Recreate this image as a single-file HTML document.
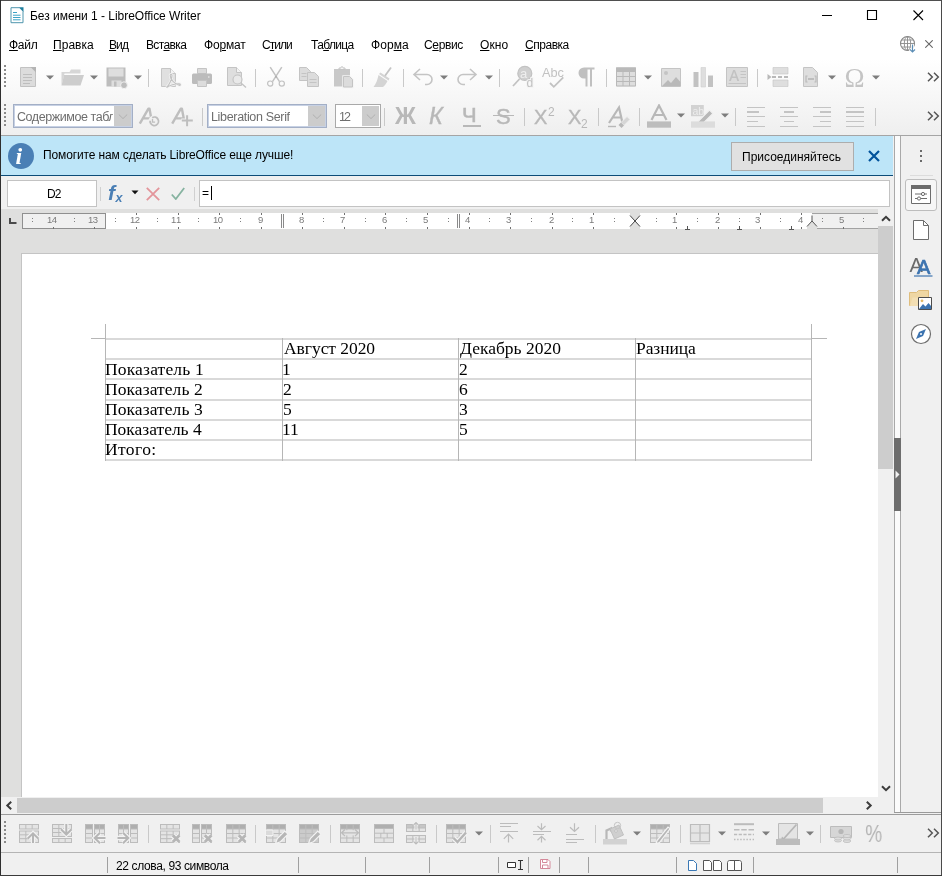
<!DOCTYPE html>
<html lang="ru"><head><meta charset="utf-8"><title>Без имени 1 - LibreOffice Writer</title>
<style>
html,body{margin:0;padding:0}
body{width:942px;height:876px;position:relative;overflow:hidden;background:#f0f0f0;font-family:"Liberation Sans",sans-serif;font-size:12px;color:#000}
.a{position:absolute}
.t{white-space:nowrap;will-change:transform}
svg{will-change:transform}
u{text-decoration:underline;text-underline-offset:1px;text-decoration-thickness:1px}
</style></head>
<body>
<div class="a" style="left:0px;top:0px;width:942px;height:876px;background:#f0f0f0;"></div>
<div class="a" style="left:0px;top:0px;width:942px;height:59px;background:#ffffff;"></div>
<div class="a" style="left:0px;top:59px;width:942px;height:76px;background:linear-gradient(#ffffff,#efefef);"></div>
<div class="a" style="left:0px;top:135px;width:942px;height:1px;background:#a5a5a5;"></div>
<div class="a" style="left:1px;top:136px;width:892px;height:39px;background:#bde5f8;"></div>
<div class="a" style="left:1px;top:175px;width:892px;height:1px;background:#0d4c78;"></div>
<div class="a" style="left:1px;top:176px;width:893px;height:33px;background:#f0f0f0;"></div>
<div class="a" style="left:1px;top:209px;width:877px;height:589px;background:#dfdfde;"></div>
<svg class="a" style="left:10px;top:7px" width="14" height="17" viewBox="0 0 14 17"><path d="M1 0.700h8.500l3.500 3.500v11.500h-12z" fill="#fff" stroke="#4f96ad"/><path d="M9 0.200l4.500 4.500v-4.500z" fill="#1f7f9e"/><path d="M3 5.500h4M3 8.200h7.500M3 10.500h7.500M3 12.800h7.500" stroke="#3aa3c6" stroke-width="1"/></svg>
<div class="a t" style="left:30px;top:10px;font-size:12px;line-height:12px;color:#000;letter-spacing:-0.032px;">Без имени 1 - LibreOffice Writer</div>
<svg class="a" style="left:815px;top:5px" width="120" height="22" viewBox="0 0 120 22"><path d="M7 10.500h10" stroke="#000"/><path d="M52.500 5.500h9v9h-9z" fill="none" stroke="#000" stroke-width="1.100"/><path d="M98.500 5.500l9.500 9.500M108 5.500l-9.500 9.500" stroke="#000" stroke-width="1.100"/></svg>
<div class="a t" style="left:9px;top:39px;font-size:12px;line-height:12px;color:#000;letter-spacing:-0.267px;"><u>Ф</u>айл</div>
<div class="a t" style="left:53px;top:39px;font-size:12px;line-height:12px;color:#000;letter-spacing:0.04px;"><u>П</u>равка</div>
<div class="a t" style="left:109px;top:39px;font-size:12px;line-height:12px;color:#000;letter-spacing:-0.9px;"><u>В</u>ид</div>
<div class="a t" style="left:146px;top:39px;font-size:12px;line-height:12px;color:#000;letter-spacing:-0.633px;">Вст<u>а</u>вка</div>
<div class="a t" style="left:204px;top:39px;font-size:12px;line-height:12px;color:#000;letter-spacing:-0.16px;">Фо<u>р</u>мат</div>
<div class="a t" style="left:262px;top:39px;font-size:12px;line-height:12px;color:#000;letter-spacing:-0.95px;">С<u>т</u>или</div>
<div class="a t" style="left:311px;top:39px;font-size:12px;line-height:12px;color:#000;letter-spacing:-0.633px;">Та<u>б</u>лица</div>
<div class="a t" style="left:371px;top:39px;font-size:12px;line-height:12px;color:#000;letter-spacing:0.05px;">Фор<u>м</u>а</div>
<div class="a t" style="left:424px;top:39px;font-size:12px;line-height:12px;color:#000;letter-spacing:-0.36px;">С<u>е</u>рвис</div>
<div class="a t" style="left:480px;top:39px;font-size:12px;line-height:12px;color:#000;letter-spacing:0.067px;"><u>О</u>кно</div>
<div class="a t" style="left:525px;top:39px;font-size:12px;line-height:12px;color:#000;letter-spacing:-0.467px;"><u>С</u>правка</div>
<svg class="a" style="left:899px;top:35px" width="20" height="19" viewBox="0 0 20 19"><circle cx="8.500" cy="8.500" r="7" fill="#fff" stroke="#858585" stroke-width="1.100"/><ellipse cx="8.500" cy="8.500" rx="3.200" ry="7" fill="none" stroke="#8a8a8a" stroke-width="0.900"/><path d="M1.500 8.500h14M2.800 5h11.400M2.800 12h11.400M8.500 1.500v14" stroke="#8a8a8a" stroke-width="0.900"/><path d="M13.500 9v8M10.800 14.300l2.700 2.700l2.700-2.700" stroke="#fff" stroke-width="2.600" fill="none"/><path d="M13.500 9.500v7.500M11 14.500l2.500 2.500l2.500-2.500" stroke="#5b8db5" stroke-width="1.100" fill="none"/></svg>
<svg class="a" style="left:925px;top:40px" width="8" height="8" viewBox="0 0 8 8"><path d="M0.300 0.300l7.400 7.400M7.700 0.300l-7.400 7.400" stroke="#666" stroke-width="1.100"/></svg>
<div class="a" style="left:4px;top:65px;width:2px;height:2px;background:#8a8a8a"></div><div class="a" style="left:4px;top:69px;width:2px;height:2px;background:#8a8a8a"></div><div class="a" style="left:4px;top:73px;width:2px;height:2px;background:#8a8a8a"></div><div class="a" style="left:4px;top:77px;width:2px;height:2px;background:#8a8a8a"></div><div class="a" style="left:4px;top:81px;width:2px;height:2px;background:#8a8a8a"></div><div class="a" style="left:4px;top:85px;width:2px;height:2px;background:#8a8a8a"></div>
<svg class="a" style="left:16px;top:65px" width="24" height="24" viewBox="0 0 24 24"><path d="M4.5 2.5h15v19h-15z" fill="#dcdcdc" stroke="#c2c2c2"/><path d="M14.5 2h5.500v5.500z" fill="#b4b4b4"/><path d="M7 9.500h9M7 12.500h9M7 15.500h9M7 18.500h7" stroke="#bebebe"/></svg>
<svg class="a" style="left:61px;top:65px" width="24" height="24" viewBox="0 0 24 24"><path d="M0.500 20.500v-13.500h8l1.500-2.500h9.500v4h-16z" fill="#d6d6d6"/><path d="M0.500 20.500l2.500-10.500h20l-3.500 10.500z" fill="#cdcdcd"/></svg>
<svg class="a" style="left:104px;top:65px" width="24" height="24" viewBox="0 0 24 24"><path d="M2.500 2.500h19v19h-19z" fill="#bdbdbd"/><path d="M4.500 3.500h15v8h-15z" fill="#dedede"/><path d="M7.500 15.500h10v6h-10z" fill="#dedede"/><path d="M10 16.500h2.500v5h-2.500z" fill="#bdbdbd"/><circle cx="20" cy="20.200" r="3.400" fill="#bdbdbd" stroke="#f4f4f4" stroke-width="0.900"/></svg>
<svg class="a" style="left:158px;top:65px" width="24" height="24" viewBox="0 0 24 24"><path d="M3.500 3.500h9l5 5v13h-14z" fill="#e0e0e0" stroke="#c6c6c6"/><path d="M12.500 3.500v5h5" fill="#f4f4f4" stroke="#c6c6c6"/><path d="M8.500 22.500c3-3 5.500-8.500 5.500-12c0-1.600-1.800-1.600-1.800 0c0 4 4.500 8.500 9 9.800c1.600 0.400 1.600-1.600-0.400-1.600c-4 0-8.500 1.300-12.300 3.800z" fill="none" stroke="#f2f2f2" stroke-width="2.800"/><path d="M8.500 22.500c3-3 5.500-8.500 5.500-12c0-1.600-1.800-1.600-1.800 0c0 4 4.500 8.500 9 9.800c1.600 0.400 1.600-1.600-0.400-1.600c-4 0-8.500 1.300-12.300 3.800z" fill="none" stroke="#c2c2c2" stroke-width="1.100"/></svg>
<svg class="a" style="left:190px;top:65px" width="24" height="24" viewBox="0 0 24 24"><path d="M7.500 3.500h9v5h-9z" fill="#dcdcdc" stroke="#c4c4c4"/><rect x="2" y="8.500" width="20" height="10.500" rx="1.500" fill="#bcbcbc"/><path d="M7.500 15.500h9v6h-9z" fill="#dcdcdc" stroke="#c4c4c4"/><path d="M18 12h1.500" stroke="#f4f4f4"/></svg>
<svg class="a" style="left:224px;top:65px" width="24" height="24" viewBox="0 0 24 24"><path d="M3.500 2.500h9l5 5v13h-14z" fill="#dedede" stroke="#c4c4c4"/><path d="M12.500 2.500v5h5" fill="#f4f4f4" stroke="#c4c4c4"/><circle cx="13.500" cy="14.500" r="4.500" fill="#e9e9e9" stroke="#c4c4c4" stroke-width="1.200"/><path d="M17 18l5 4.500" stroke="#c4c4c4" stroke-width="1.400"/></svg>
<svg class="a" style="left:264px;top:65px" width="24" height="24" viewBox="0 0 24 24"><path d="M6.200 2.200l9.300 14.500M17.800 2.200l-9.300 14.500" stroke="#c2c2c2" stroke-width="1.500" fill="none"/><circle cx="6.200" cy="18.600" r="2.600" fill="none" stroke="#c2c2c2" stroke-width="1.200"/><circle cx="17.800" cy="18.600" r="2.600" fill="none" stroke="#c2c2c2" stroke-width="1.200"/><circle cx="12" cy="11.800" r="1.100" fill="#b0b0b0"/></svg>
<svg class="a" style="left:297px;top:65px" width="24" height="24" viewBox="0 0 24 24"><path d="M2.500 2.500h7l4 4v9h-11z" fill="#dcdcdc" stroke="#c4c4c4"/><path d="M4.500 8.500h5M4.500 11.500h5" stroke="#c4c4c4"/><path d="M10.500 7.500h7l4 4v10h-11z" fill="#dcdcdc" stroke="#c4c4c4"/><path d="M12.500 14.500h7M12.500 17.500h7" stroke="#c4c4c4"/></svg>
<svg class="a" style="left:331px;top:65px" width="24" height="24" viewBox="0 0 24 24"><path d="M3 4h16v17.500h-16z" fill="#c8c8c8"/><path d="M8 4.500v-1.500h2c0-2 2-2 2 0h2v1.500z" fill="#f4f4f4" stroke="#c4c4c4"/><path d="M12.500 11.500h6l3 3v7.500h-9z" fill="#dcdcdc" stroke="#f4f4f4" stroke-width="2.400"/><path d="M12.500 11.500h6l3 3v7.500h-9z" fill="#dcdcdc" stroke="#c4c4c4"/></svg>
<svg class="a" style="left:371px;top:65px" width="24" height="24" viewBox="0 0 24 24"><path d="M20 2.500l-6.500 9" stroke="#c4c4c4" stroke-width="1.800"/><path d="M8 9l1.500-1.500l9 6l-1 2zM7.500 10l9 6c-1.500 3-3 5-4.500 6h-9.500c2.500-3 4-7 5-12z" fill="#d4d4d4"/></svg>
<svg class="a" style="left:411px;top:65px" width="24" height="24" viewBox="0 0 24 24"><path d="M9 4l-6 5.500l6 5.500M3 9.500h13a5 5 0 0 1 0 10h-2" fill="none" stroke="#c4c4c4" stroke-width="1.600"/></svg>
<svg class="a" style="left:455px;top:65px" width="24" height="24" viewBox="0 0 24 24"><path d="M15 4l6 5.500l-6 5.500M21 9.500h-13a5 5 0 0 0 0 10h2" fill="none" stroke="#c4c4c4" stroke-width="1.600"/></svg>
<svg class="a" style="left:511px;top:65px" width="24" height="24" viewBox="0 0 24 24"><circle cx="13.800" cy="8.400" r="7" fill="#cfcfcf" stroke="#c2c2c2" stroke-width="1.200"/><path d="M8.500 14l-6.500 7" stroke="#c2c2c2" stroke-width="1.800"/><text x="9" y="13" font-family="Liberation Sans,sans-serif" font-size="13" fill="#eeeeee">a</text><text x="15.500" y="22" font-family="Liberation Sans,sans-serif" font-size="12" fill="#c2c2c2" stroke="#f4f4f4" stroke-width="2" paint-order="stroke">d</text></svg>
<svg class="a" style="left:541px;top:65px" width="24" height="24" viewBox="0 0 24 24"><text x="1" y="11.500" font-family="Liberation Sans,sans-serif" font-size="12.500" fill="#c2c2c2" textLength="22" lengthAdjust="spacingAndGlyphs">Abc</text><path d="M9 18l3.800 3.800l9.500-9.500" fill="none" stroke="#c2c2c2" stroke-width="1.800"/></svg>
<svg class="a" style="left:574px;top:65px" width="24" height="24" viewBox="0 0 24 24"><path d="M10 2.500h10.500v2h-2.500v17h-2v-17h-2.500v17h-2v-8h-1.500a5.500 5.500 0 0 1 0-11z" fill="#c0c0c0"/></svg>
<svg class="a" style="left:614px;top:65px" width="24" height="24" viewBox="0 0 24 24"><path d="M2 2.500h20v19h-20z" fill="#dedede"/><path d="M2 2.500h20v4h-20z" fill="#b9b9b9"/><path d="M2.500 3h19v18h-19zM2.500 6.500h19M2.500 11.500h19M2.500 16.500h19M9 6.500v14.500M15.500 6.500v14.500" fill="none" stroke="#b9b9b9"/></svg>
<svg class="a" style="left:659px;top:65px" width="24" height="24" viewBox="0 0 24 24"><path d="M2.500 3.500h19v18h-19z" fill="#dedede" stroke="#c4c4c4"/><circle cx="7" cy="8" r="2" fill="#c4c4c4"/><path d="M3 21l6-6l3 3l5-6l4.500 5v4z" fill="#b9b9b9"/></svg>
<svg class="a" style="left:691px;top:65px" width="24" height="24" viewBox="0 0 24 24"><path d="M2.500 7h5v15h-5z" fill="#c2c2c2"/><path d="M10 2.500h4.500v19.500h-4.500z" fill="#dedede" stroke="#cccccc" stroke-width="0.600"/><path d="M17 10.500h5v11.500h-5z" fill="#c2c2c2"/></svg>
<svg class="a" style="left:725px;top:65px" width="24" height="24" viewBox="0 0 24 24"><path d="M1.500 2.500h21v19h-21z" fill="#dcdcdc" stroke="#c4c4c4"/><path d="M4 16l4.200-11h1.800l4.200 11h-1.900l-1-2.900h-4.400l-1 2.900zM7.400 11.500h3.400l-1.700-4.700z" fill="#c2c2c2"/><path d="M15.500 6.500h5.500M15.500 9.500h5.500M15.500 12.500h5.500M3.500 18.500h17.500" stroke="#c4c4c4"/></svg>
<svg class="a" style="left:766px;top:65px" width="24" height="24" viewBox="0 0 24 24"><path d="M7 2.500h15v6.500h-15zM7 15h15v6.500h-15z" fill="#dedede" stroke="#c4c4c4" stroke-width="0.600"/><path d="M6 12h4M12 12h4M18 12h4" stroke="#b9b9b9" stroke-width="1.800"/><path d="M1.500 9l4 3l-4 3z" fill="#b9b9b9"/></svg>
<svg class="a" style="left:799px;top:65px" width="24" height="24" viewBox="0 0 24 24"><path d="M4.500 2.500h9l5 5v14h-14z" fill="#dedede" stroke="#c4c4c4"/><path d="M8.500 11h-1.500v6h1.500M15.500 11h1.500v6h-1.500" fill="none" stroke="#b9b9b9" stroke-width="1.200"/><path d="M9 14h6" stroke="#b9b9b9" stroke-width="1.800"/></svg>
<svg class="a" style="left:843px;top:65px" width="24" height="24" viewBox="0 0 24 24"><text x="1.500" y="21.500" font-family="Liberation Serif,serif" font-size="27" fill="#c4c4c4">Ω</text></svg>
<svg class="a" style="left:46px;top:75px" width="8" height="5" viewBox="0 0 8 5"><path d="M0 0.4h8L4 4.6z" fill="#7d7d7d"/></svg>
<svg class="a" style="left:89.6px;top:75px" width="8" height="5" viewBox="0 0 8 5"><path d="M0 0.4h8L4 4.6z" fill="#7d7d7d"/></svg>
<svg class="a" style="left:133.7px;top:75px" width="8" height="5" viewBox="0 0 8 5"><path d="M0 0.4h8L4 4.6z" fill="#7d7d7d"/></svg>
<svg class="a" style="left:440px;top:75px" width="8" height="5" viewBox="0 0 8 5"><path d="M0 0.4h8L4 4.6z" fill="#7d7d7d"/></svg>
<svg class="a" style="left:484.5px;top:75px" width="8" height="5" viewBox="0 0 8 5"><path d="M0 0.4h8L4 4.6z" fill="#7d7d7d"/></svg>
<svg class="a" style="left:643.5px;top:75px" width="8" height="5" viewBox="0 0 8 5"><path d="M0 0.4h8L4 4.6z" fill="#7d7d7d"/></svg>
<svg class="a" style="left:828px;top:75px" width="8" height="5" viewBox="0 0 8 5"><path d="M0 0.4h8L4 4.6z" fill="#7d7d7d"/></svg>
<svg class="a" style="left:872px;top:75px" width="8" height="5" viewBox="0 0 8 5"><path d="M0 0.4h8L4 4.6z" fill="#7d7d7d"/></svg>
<div class="a" style="left:148px;top:69px;width:1px;height:18px;background:#c9c9c9"></div>
<div class="a" style="left:255px;top:69px;width:1px;height:18px;background:#c9c9c9"></div>
<div class="a" style="left:362px;top:69px;width:1px;height:18px;background:#c9c9c9"></div>
<div class="a" style="left:403px;top:69px;width:1px;height:18px;background:#c9c9c9"></div>
<div class="a" style="left:499px;top:69px;width:1px;height:18px;background:#c9c9c9"></div>
<div class="a" style="left:606px;top:69px;width:1px;height:18px;background:#c9c9c9"></div>
<div class="a" style="left:757px;top:69px;width:1px;height:18px;background:#c9c9c9"></div>
<svg class="a" style="left:926.5px;top:71.5px" width="13" height="10" viewBox="0 0 13 10"><path d="M1 0.7L5.3 5L1 9.3M7 0.7L11.3 5L7 9.3" fill="none" stroke="#555" stroke-width="1.5"/></svg>
<div class="a" style="left:4px;top:104px;width:2px;height:2px;background:#8a8a8a"></div><div class="a" style="left:4px;top:108px;width:2px;height:2px;background:#8a8a8a"></div><div class="a" style="left:4px;top:112px;width:2px;height:2px;background:#8a8a8a"></div><div class="a" style="left:4px;top:116px;width:2px;height:2px;background:#8a8a8a"></div><div class="a" style="left:4px;top:120px;width:2px;height:2px;background:#8a8a8a"></div><div class="a" style="left:4px;top:124px;width:2px;height:2px;background:#8a8a8a"></div>
<svg class="a" style="left:926.5px;top:111px" width="13" height="10" viewBox="0 0 13 10"><path d="M1 0.7L5.3 5L1 9.3M7 0.7L11.3 5L7 9.3" fill="none" stroke="#555" stroke-width="1.5"/></svg>
<div class="a" style="left:13px;top:104px;width:118px;height:22px;border:1px solid #a3afc6;background:#fff;box-shadow:inset 0 0 0 1px #c7d1e4"></div><div class="a" style="left:114px;top:106px;width:17px;height:20px;background:#cccccc"></div><svg class="a" style="left:117.5px;top:113.5px" width="10" height="6" viewBox="0 0 10 6"><path d="M0.800 0.500L5 4.600L9.200 0.500" fill="none" stroke="#adadad" stroke-width="0.900"/></svg>
<div class="a t" style="left:17px;top:111px;font-size:12.5px;line-height:12.5px;color:#6e6e6e;letter-spacing:-0.429px;width:96px;overflow:hidden;">Содержимое табл</div>
<div class="a" style="left:207px;top:104px;width:118px;height:22px;border:1px solid #a3afc6;background:#fff;box-shadow:inset 0 0 0 1px #c7d1e4"></div><div class="a" style="left:308px;top:106px;width:17px;height:20px;background:#cccccc"></div><svg class="a" style="left:311.5px;top:113.5px" width="10" height="6" viewBox="0 0 10 6"><path d="M0.800 0.500L5 4.600L9.200 0.500" fill="none" stroke="#adadad" stroke-width="0.900"/></svg>
<div class="a t" style="left:211px;top:111px;font-size:12.5px;line-height:12.5px;color:#6e6e6e;letter-spacing:-0.333px;">Liberation Serif</div>
<div class="a" style="left:335px;top:104px;width:44px;height:22px;border:1px solid #a9a9a9;background:#fff;box-shadow:inset 0 0 0 1px #ffffff"></div><div class="a" style="left:362px;top:106px;width:17px;height:20px;background:#cccccc"></div><svg class="a" style="left:365.5px;top:113.5px" width="10" height="6" viewBox="0 0 10 6"><path d="M0.800 0.500L5 4.600L9.200 0.500" fill="none" stroke="#adadad" stroke-width="0.900"/></svg>
<div class="a t" style="left:339px;top:111px;font-size:12.5px;line-height:12.5px;color:#6e6e6e;letter-spacing:-2px;">12</div>
<div class="a" style="left:202px;top:108px;width:1px;height:18px;background:#c9c9c9"></div>
<div class="a" style="left:384px;top:108px;width:1px;height:18px;background:#c9c9c9"></div>
<div class="a" style="left:524px;top:108px;width:1px;height:18px;background:#c9c9c9"></div>
<div class="a" style="left:598px;top:108px;width:1px;height:18px;background:#c9c9c9"></div>
<div class="a" style="left:639px;top:108px;width:1px;height:18px;background:#c9c9c9"></div>
<div class="a" style="left:735px;top:108px;width:1px;height:18px;background:#c9c9c9"></div>
<div class="a" style="left:875px;top:108px;width:1px;height:18px;background:#c9c9c9"></div>
<svg class="a" style="left:138px;top:104px" width="24" height="24" viewBox="0 0 24 24"><path d="M1.800 19.600L10.300 4.800h1.200l1.900 10.500M5.500 14.400h7.800" fill="none" stroke="#bebebe" stroke-width="2.400" stroke-linejoin="round"/><circle cx="16.300" cy="17.300" r="4.200" fill="#f1f1f1" stroke="#f1f1f1" stroke-width="3.500"/><circle cx="16.300" cy="17.300" r="4.200" fill="none" stroke="#bebebe" stroke-width="1.800" stroke-dasharray="22 4.400" transform="rotate(-120 16.300 17.300)"/><path d="M14.500 15v3.200h2.600" fill="none" stroke="#bebebe" stroke-width="1.300"/></svg>
<svg class="a" style="left:171px;top:104px" width="24" height="24" viewBox="0 0 24 24"><path d="M1.200 19.600L9.700 4.800h1.200l2.100 11M4.900 14.400h7.800" fill="none" stroke="#bebebe" stroke-width="2.400" stroke-linejoin="round"/><path d="M16.100 10.500v12M10.300 16.600h12" stroke="#f1f1f1" stroke-width="4.200"/><path d="M16.100 11.300v11M10.800 16.600h11" stroke="#bebebe" stroke-width="2"/></svg>
<div class="a t" style="left:394.5px;top:105px;font-size:23px;line-height:23px;color:#b8b8b8;font-weight:bold;">Ж</div>
<div class="a t" style="left:429px;top:105px;font-size:23.5px;line-height:23.5px;color:#b8b8b8;font-style:italic;-webkit-text-stroke:0.4px #b8b8b8;">К</div>
<div class="a t" style="left:462px;top:105px;font-size:20px;line-height:20px;color:#b8b8b8;-webkit-text-stroke:0.5px #b8b8b8;transform:scaleX(1.1);transform-origin:0 0;">Ч</div>
<div class="a" style="left:463px;top:125px;width:18px;height:1.5px;background:#b8b8b8;"></div>
<div class="a t" style="left:496px;top:106px;font-size:22px;line-height:22px;color:#b8b8b8;-webkit-text-stroke:0.4px #b8b8b8;">S</div>
<div class="a" style="left:493px;top:114.5px;width:21px;height:1.5px;background:#b8b8b8;"></div>
<div class="a t" style="left:534.4px;top:107px;font-size:20px;line-height:20px;color:#b8b8b8;-webkit-text-stroke:0.4px #b8b8b8;">X</div>
<div class="a t" style="left:548px;top:106px;font-size:12px;line-height:12px;color:#b8b8b8;">2</div>
<div class="a t" style="left:567.8px;top:107px;font-size:20px;line-height:20px;color:#b8b8b8;-webkit-text-stroke:0.4px #b8b8b8;">X</div>
<div class="a t" style="left:581px;top:118px;font-size:12px;line-height:12px;color:#b8b8b8;">2</div>
<svg class="a" style="left:607px;top:104px" width="24" height="24" viewBox="0 0 24 24"><path d="M2 19l10-15.500l3.500 15.500M6 13.500h8" fill="none" stroke="#b8b8b8" stroke-width="2.200"/><path d="M1 22.500h8" stroke="#b8b8b8" stroke-width="1.400"/><path d="M14 18.500l6-6l3 3l-6 6z" fill="#d6d6d6" stroke="#f1f1f1" stroke-width="0.800"/><path d="M11.500 21l2.500-2.500l3 3l-2.500 2.500z" fill="#b8b8b8"/></svg>
<svg class="a" style="left:647px;top:104px" width="24" height="24" viewBox="0 1 24 24"><path d="M4.500 17l7.500-14.500l7.500 14.500M7.500 12h9" fill="none" stroke="#b8b8b8" stroke-width="2.200"/><path d="M0 18.400h24v6.300h-24z" fill="#bdbdbd"/></svg>
<svg class="a" style="left:676.5px;top:113px" width="8" height="5" viewBox="0 0 8 5"><path d="M0 0.4h8L4 4.6z" fill="#7d7d7d"/></svg>
<svg class="a" style="left:691px;top:104px" width="24" height="24" viewBox="0 1 24 24"><path d="M0 2h12.800v11.200h-12.800z" fill="#d2d2d2"/><text x="1.500" y="11.500" font-family="Liberation Sans,sans-serif" font-size="10.500" fill="#ececec">ab</text><path d="M7.500 18l11-11l3.500 3.500l-11 11l-4.500 1z" fill="#b8b8b8" stroke="#f1f1f1" stroke-width="1.200"/><path d="M0 18.400h24v6.300h-24z" fill="#dcdcdc"/></svg>
<svg class="a" style="left:720.8px;top:113px" width="8" height="5" viewBox="0 0 8 5"><path d="M0 0.4h8L4 4.6z" fill="#7d7d7d"/></svg>
<div class="a" style="left:747px;top:106.5px;width:18px;height:1.300px;background:#c4c4c4"></div><div class="a" style="left:747px;top:111.25px;width:12px;height:1.300px;background:#c4c4c4"></div><div class="a" style="left:747px;top:116px;width:18px;height:1.300px;background:#c4c4c4"></div><div class="a" style="left:747px;top:120.75px;width:11px;height:1.300px;background:#c4c4c4"></div><div class="a" style="left:747px;top:125.5px;width:18px;height:1.300px;background:#c4c4c4"></div>
<div class="a" style="left:780px;top:106.5px;width:18px;height:1.300px;background:#c4c4c4"></div><div class="a" style="left:784px;top:111.25px;width:10px;height:1.300px;background:#c4c4c4"></div><div class="a" style="left:780px;top:116px;width:18px;height:1.300px;background:#c4c4c4"></div><div class="a" style="left:784px;top:120.75px;width:10px;height:1.300px;background:#c4c4c4"></div><div class="a" style="left:780px;top:125.5px;width:18px;height:1.300px;background:#c4c4c4"></div>
<div class="a" style="left:813px;top:106.5px;width:18px;height:1.300px;background:#c4c4c4"></div><div class="a" style="left:820px;top:111.25px;width:11px;height:1.300px;background:#c4c4c4"></div><div class="a" style="left:813px;top:116px;width:18px;height:1.300px;background:#c4c4c4"></div><div class="a" style="left:820px;top:120.75px;width:11px;height:1.300px;background:#c4c4c4"></div><div class="a" style="left:813px;top:125.5px;width:18px;height:1.300px;background:#c4c4c4"></div>
<div class="a" style="left:846px;top:106.5px;width:18px;height:1.300px;background:#c4c4c4"></div><div class="a" style="left:846px;top:111.25px;width:18px;height:1.300px;background:#c4c4c4"></div><div class="a" style="left:846px;top:116px;width:18px;height:1.300px;background:#c4c4c4"></div><div class="a" style="left:846px;top:120.75px;width:18px;height:1.300px;background:#c4c4c4"></div><div class="a" style="left:846px;top:125.5px;width:18px;height:1.300px;background:#c4c4c4"></div>
<svg class="a" style="left:7px;top:142px" width="28" height="28" viewBox="0 0 28 28"><circle cx="14" cy="14" r="13" fill="#4a7fb5"/><text x="8.500" y="22" font-family="Liberation Serif,serif" font-style="italic" font-weight="bold" font-size="24" fill="#fff">i</text></svg>
<div class="a t" style="left:43px;top:149px;font-size:12px;line-height:12px;color:#000;letter-spacing:-0.131px;">Помогите нам сделать LibreOffice еще лучше!</div>
<div class="a" style="left:731px;top:142px;width:121px;height:27px;border:1px solid #adadad;background:#e1e1e1"></div>
<div class="a t" style="left:742px;top:151px;font-size:12px;line-height:12px;color:#000;">Присоединяйтесь</div>
<svg class="a" style="left:868px;top:150px" width="12" height="12" viewBox="0 0 12 12"><path d="M1 1l10 10M11 1l-10 10" stroke="#00529b" stroke-width="2.200"/></svg>
<div class="a" style="left:7px;top:180px;width:88px;height:25px;border:1px solid #c3c3c3;background:#fff"></div>
<div class="a t" style="left:47px;top:188px;font-size:12px;line-height:12px;color:#000;letter-spacing:-1px;">D2</div>
<div class="a" style="left:100px;top:187px;width:1px;height:14px;background:#d0d0d0"></div>
<svg class="a" style="left:107px;top:183px" width="20" height="22" viewBox="0 0 20 22"><text x="1" y="17" font-family="Liberation Sans,sans-serif" font-style="italic" font-weight="bold" font-size="21" fill="#4a7fb5">f</text><text x="8.500" y="19" font-family="Liberation Sans,sans-serif" font-style="italic" font-weight="bold" font-size="12.500" fill="#4a7fb5">x</text></svg>
<svg class="a" style="left:131px;top:190px" width="8" height="5" viewBox="0 0 8 5"><path d="M0.500 0.500h7L4 4.300z" fill="#111"/></svg>
<svg class="a" style="left:146px;top:186.500px" width="14" height="14" viewBox="0 0 14 14"><path d="M0.800 0.800l12.400 12.400M13.200 0.800l-12.400 12.400" stroke="#e3959b" stroke-width="1.800"/></svg>
<svg class="a" style="left:171px;top:187px" width="14" height="13" viewBox="0 0 14 13"><path d="M0.800 7.500l4 4.500l8.400-11" fill="none" stroke="#86b3a0" stroke-width="1.800"/></svg>
<div class="a" style="left:194px;top:187px;width:1px;height:14px;background:#d0d0d0"></div>
<div class="a" style="left:199px;top:180px;width:689px;height:25px;border:1px solid #c3c3c3;background:#fff"></div>
<div class="a t" style="left:202px;top:187px;font-size:12px;line-height:12px;color:#000;">=</div>
<div class="a" style="left:211px;top:186px;width:1px;height:14px;background:#000;"></div>
<svg class="a" style="left:9px;top:218px" width="8" height="6" viewBox="0 0 8 6"><path d="M1 0v5h6.500" fill="none" stroke="#4a4a4a" stroke-width="2"/></svg>
<div class="a" style="left:22px;top:213px;width:82px;height:14px;border:1px solid #8f8f8f;background:#f0f0f0"></div>
<div class="a" style="left:106px;top:213px;width:706px;height:16px;background:#ffffff;"></div>
<div class="a" style="left:812px;top:213px;width:66px;height:14px;border-top:1px solid #a2a2a2;border-bottom:1px solid #a2a2a2;background:#f0f0f0"></div>
<div class="a t" style="left:47px;top:215px;font-size:9.5px;line-height:9.5px;color:#7a7a7a;letter-spacing:-0.5px;">14</div>
<div class="a" style="left:53px;top:227px;width:1px;height:2px;background:#707070;"></div>
<div class="a" style="left:32px;top:218px;width:1px;height:1px;background:#808080;"></div>
<div class="a" style="left:32px;top:221px;width:1px;height:1px;background:#808080;"></div>
<div class="a t" style="left:88px;top:215px;font-size:9.5px;line-height:9.5px;color:#7a7a7a;letter-spacing:-0.5px;">13</div>
<div class="a" style="left:94px;top:227px;width:1px;height:2px;background:#707070;"></div>
<div class="a" style="left:74px;top:218px;width:1px;height:1px;background:#808080;"></div>
<div class="a" style="left:74px;top:221px;width:1px;height:1px;background:#808080;"></div>
<div class="a t" style="left:130px;top:215px;font-size:9.5px;line-height:9.5px;color:#7a7a7a;letter-spacing:-0.5px;">12</div>
<div class="a" style="left:136px;top:227px;width:1px;height:2px;background:#707070;"></div>
<div class="a" style="left:136px;top:213px;width:1px;height:1.5px;background:#707070;"></div>
<div class="a" style="left:115px;top:218px;width:1px;height:1px;background:#808080;"></div>
<div class="a" style="left:115px;top:221px;width:1px;height:1px;background:#808080;"></div>
<div class="a t" style="left:171px;top:215px;font-size:9.5px;line-height:9.5px;color:#7a7a7a;letter-spacing:0.5px;">11</div>
<div class="a" style="left:178px;top:227px;width:1px;height:2px;background:#707070;"></div>
<div class="a" style="left:178px;top:213px;width:1px;height:1.5px;background:#707070;"></div>
<div class="a" style="left:157px;top:218px;width:1px;height:1px;background:#808080;"></div>
<div class="a" style="left:157px;top:221px;width:1px;height:1px;background:#808080;"></div>
<div class="a t" style="left:213px;top:215px;font-size:9.5px;line-height:9.5px;color:#7a7a7a;letter-spacing:-0.5px;">10</div>
<div class="a" style="left:219px;top:227px;width:1px;height:2px;background:#707070;"></div>
<div class="a" style="left:219px;top:213px;width:1px;height:1.5px;background:#707070;"></div>
<div class="a" style="left:198px;top:218px;width:1px;height:1px;background:#808080;"></div>
<div class="a" style="left:198px;top:221px;width:1px;height:1px;background:#808080;"></div>
<div class="a t" style="left:258px;top:215px;font-size:9.5px;line-height:9.5px;color:#7a7a7a;">9</div>
<div class="a" style="left:261px;top:227px;width:1px;height:2px;background:#707070;"></div>
<div class="a" style="left:261px;top:213px;width:1px;height:1.5px;background:#707070;"></div>
<div class="a" style="left:240px;top:218px;width:1px;height:1px;background:#808080;"></div>
<div class="a" style="left:240px;top:221px;width:1px;height:1px;background:#808080;"></div>
<div class="a t" style="left:299px;top:215px;font-size:9.5px;line-height:9.5px;color:#7a7a7a;">8</div>
<div class="a" style="left:302px;top:227px;width:1px;height:2px;background:#707070;"></div>
<div class="a" style="left:302px;top:213px;width:1px;height:1.5px;background:#707070;"></div>
<div class="a" style="left:281px;top:218px;width:1px;height:1px;background:#808080;"></div>
<div class="a" style="left:281px;top:221px;width:1px;height:1px;background:#808080;"></div>
<div class="a t" style="left:340px;top:215px;font-size:9.5px;line-height:9.5px;color:#7a7a7a;">7</div>
<div class="a" style="left:344px;top:227px;width:1px;height:2px;background:#707070;"></div>
<div class="a" style="left:344px;top:213px;width:1px;height:1.5px;background:#707070;"></div>
<div class="a" style="left:323px;top:218px;width:1px;height:1px;background:#808080;"></div>
<div class="a" style="left:323px;top:221px;width:1px;height:1px;background:#808080;"></div>
<div class="a t" style="left:382px;top:215px;font-size:9.5px;line-height:9.5px;color:#7a7a7a;">6</div>
<div class="a" style="left:385px;top:227px;width:1px;height:2px;background:#707070;"></div>
<div class="a" style="left:385px;top:213px;width:1px;height:1.5px;background:#707070;"></div>
<div class="a" style="left:365px;top:218px;width:1px;height:1px;background:#808080;"></div>
<div class="a" style="left:365px;top:221px;width:1px;height:1px;background:#808080;"></div>
<div class="a t" style="left:423px;top:215px;font-size:9.5px;line-height:9.5px;color:#7a7a7a;">5</div>
<div class="a" style="left:427px;top:227px;width:1px;height:2px;background:#707070;"></div>
<div class="a" style="left:427px;top:213px;width:1px;height:1.5px;background:#707070;"></div>
<div class="a" style="left:406px;top:218px;width:1px;height:1px;background:#808080;"></div>
<div class="a" style="left:406px;top:221px;width:1px;height:1px;background:#808080;"></div>
<div class="a t" style="left:465px;top:215px;font-size:9.5px;line-height:9.5px;color:#7a7a7a;">4</div>
<div class="a" style="left:469px;top:227px;width:1px;height:2px;background:#707070;"></div>
<div class="a" style="left:469px;top:213px;width:1px;height:1.5px;background:#707070;"></div>
<div class="a" style="left:448px;top:218px;width:1px;height:1px;background:#808080;"></div>
<div class="a" style="left:448px;top:221px;width:1px;height:1px;background:#808080;"></div>
<div class="a t" style="left:506px;top:215px;font-size:9.5px;line-height:9.5px;color:#7a7a7a;">3</div>
<div class="a" style="left:510px;top:227px;width:1px;height:2px;background:#707070;"></div>
<div class="a" style="left:510px;top:213px;width:1px;height:1.5px;background:#707070;"></div>
<div class="a" style="left:489px;top:218px;width:1px;height:1px;background:#808080;"></div>
<div class="a" style="left:489px;top:221px;width:1px;height:1px;background:#808080;"></div>
<div class="a t" style="left:549px;top:215px;font-size:9.5px;line-height:9.5px;color:#7a7a7a;">2</div>
<div class="a" style="left:552px;top:227px;width:1px;height:2px;background:#707070;"></div>
<div class="a" style="left:552px;top:213px;width:1px;height:1.5px;background:#707070;"></div>
<div class="a" style="left:531px;top:218px;width:1px;height:1px;background:#808080;"></div>
<div class="a" style="left:531px;top:221px;width:1px;height:1px;background:#808080;"></div>
<div class="a t" style="left:589px;top:215px;font-size:9.5px;line-height:9.5px;color:#7a7a7a;">1</div>
<div class="a" style="left:593px;top:227px;width:1px;height:2px;background:#707070;"></div>
<div class="a" style="left:593px;top:213px;width:1px;height:1.5px;background:#707070;"></div>
<div class="a" style="left:572px;top:218px;width:1px;height:1px;background:#808080;"></div>
<div class="a" style="left:572px;top:221px;width:1px;height:1px;background:#808080;"></div>
<div class="a" style="left:614px;top:218px;width:1px;height:1px;background:#808080;"></div>
<div class="a" style="left:614px;top:221px;width:1px;height:1px;background:#808080;"></div>
<div class="a t" style="left:672px;top:215px;font-size:9.5px;line-height:9.5px;color:#7a7a7a;">1</div>
<div class="a" style="left:676px;top:227px;width:1px;height:2px;background:#707070;"></div>
<div class="a" style="left:676px;top:213px;width:1px;height:1.5px;background:#707070;"></div>
<div class="a" style="left:656px;top:218px;width:1px;height:1px;background:#808080;"></div>
<div class="a" style="left:656px;top:221px;width:1px;height:1px;background:#808080;"></div>
<div class="a t" style="left:715px;top:215px;font-size:9.5px;line-height:9.5px;color:#7a7a7a;">2</div>
<div class="a" style="left:718px;top:227px;width:1px;height:2px;background:#707070;"></div>
<div class="a" style="left:718px;top:213px;width:1px;height:1.5px;background:#707070;"></div>
<div class="a" style="left:697px;top:218px;width:1px;height:1px;background:#808080;"></div>
<div class="a" style="left:697px;top:221px;width:1px;height:1px;background:#808080;"></div>
<div class="a t" style="left:755px;top:215px;font-size:9.5px;line-height:9.5px;color:#7a7a7a;">3</div>
<div class="a" style="left:760px;top:227px;width:1px;height:2px;background:#707070;"></div>
<div class="a" style="left:760px;top:213px;width:1px;height:1.5px;background:#707070;"></div>
<div class="a" style="left:739px;top:218px;width:1px;height:1px;background:#808080;"></div>
<div class="a" style="left:739px;top:221px;width:1px;height:1px;background:#808080;"></div>
<div class="a t" style="left:798px;top:215px;font-size:9.5px;line-height:9.5px;color:#7a7a7a;">4</div>
<div class="a" style="left:801px;top:227px;width:1px;height:2px;background:#707070;"></div>
<div class="a" style="left:801px;top:213px;width:1px;height:1.5px;background:#707070;"></div>
<div class="a" style="left:780px;top:218px;width:1px;height:1px;background:#808080;"></div>
<div class="a" style="left:780px;top:221px;width:1px;height:1px;background:#808080;"></div>
<div class="a t" style="left:839px;top:215px;font-size:9.5px;line-height:9.5px;color:#7a7a7a;">5</div>
<div class="a" style="left:843px;top:227px;width:1px;height:2px;background:#707070;"></div>
<div class="a" style="left:822px;top:218px;width:1px;height:1px;background:#808080;"></div>
<div class="a" style="left:822px;top:221px;width:1px;height:1px;background:#808080;"></div>
<div class="a" style="left:863px;top:218px;width:1px;height:1px;background:#808080;"></div>
<div class="a" style="left:863px;top:221px;width:1px;height:1px;background:#808080;"></div>
<div class="a" style="left:281px;top:214px;width:1px;height:14px;background:#8a8a8a;"></div>
<div class="a" style="left:283px;top:214px;width:1px;height:14px;background:#8a8a8a;"></div>
<div class="a" style="left:457px;top:214px;width:1px;height:14px;background:#8a8a8a;"></div>
<div class="a" style="left:459px;top:214px;width:1px;height:14px;background:#8a8a8a;"></div>
<svg class="a" style="left:629px;top:213px" width="12" height="16" viewBox="0 0 12 16"><path d="M1 0h10v2.500L6 8l5 5.500V16H1v-2.500L6 8L1 2.500z" fill="#dfdfde"/><path d="M1 2.500l10 11M11 2.500l-10 11" stroke="#444" stroke-width="1" fill="none"/></svg>
<svg class="a" style="left:805px;top:213px" width="14" height="16" viewBox="0 0 14 16"><path d="M2 13.500L7 8l5 5.500V16H2z" fill="#dfdfde"/><path d="M7 2.500V8M2 13.500L7 8l5 5.500" stroke="#555" stroke-width="1" fill="none"/></svg>
<div class="a" style="left:687px;top:226px;width:1px;height:3px;background:#555;"></div>
<div class="a" style="left:685px;top:228.5px;width:5px;height:1px;background:#555;"></div>
<div class="a" style="left:739px;top:226px;width:1px;height:3px;background:#555;"></div>
<div class="a" style="left:737px;top:228.5px;width:5px;height:1px;background:#555;"></div>
<div class="a" style="left:791px;top:226px;width:1px;height:3px;background:#555;"></div>
<div class="a" style="left:789px;top:228.5px;width:5px;height:1px;background:#555;"></div>
<div class="a" style="left:21px;top:253px;width:857px;height:544px;background:#fff;border-left:1px solid #c4c4c4;border-top:1px solid #c4c4c4;box-sizing:border-box"></div>
<div class="a" style="left:105px;top:324px;width:1px;height:14px;background:#b6b6b6;"></div>
<div class="a" style="left:91px;top:338px;width:14px;height:1px;background:#b6b6b6;"></div>
<div class="a" style="left:811px;top:324px;width:1px;height:14px;background:#b6b6b6;"></div>
<div class="a" style="left:812px;top:338px;width:15px;height:1px;background:#b6b6b6;"></div>
<div class="a" style="left:105px;top:338px;width:707px;height:2px;background:#d9d9d9;"></div>
<div class="a" style="left:105px;top:358px;width:707px;height:2px;background:#d9d9d9;"></div>
<div class="a" style="left:105px;top:378px;width:707px;height:2px;background:#d9d9d9;"></div>
<div class="a" style="left:105px;top:399px;width:707px;height:2px;background:#d9d9d9;"></div>
<div class="a" style="left:105px;top:419px;width:707px;height:2px;background:#d9d9d9;"></div>
<div class="a" style="left:105px;top:439px;width:707px;height:2px;background:#d9d9d9;"></div>
<div class="a" style="left:105px;top:459px;width:707px;height:2px;background:#d9d9d9;"></div>
<div class="a" style="left:105px;top:338px;width:1px;height:123px;background:#b6b6b6;"></div>
<div class="a" style="left:282px;top:338px;width:1px;height:123px;background:#b6b6b6;"></div>
<div class="a" style="left:458px;top:338px;width:1px;height:123px;background:#b6b6b6;"></div>
<div class="a" style="left:635px;top:338px;width:1px;height:123px;background:#b6b6b6;"></div>
<div class="a" style="left:811px;top:338px;width:1px;height:123px;background:#b6b6b6;"></div>
<div class="a t" style="left:284px;top:340px;font-size:17.5px;line-height:17.5px;color:#000;font-family:'Liberation Serif', serif;letter-spacing:-0.05px;">Август 2020</div>
<div class="a t" style="left:460px;top:340px;font-size:17.5px;line-height:17.5px;color:#000;font-family:'Liberation Serif', serif;">Декабрь 2020</div>
<div class="a t" style="left:636px;top:340px;font-size:17.5px;line-height:17.5px;color:#000;font-family:'Liberation Serif', serif;letter-spacing:-0.083px;">Разница</div>
<div class="a t" style="left:105px;top:361px;font-size:17.5px;line-height:17.5px;color:#000;font-family:'Liberation Serif', serif;letter-spacing:0.164px;">Показатель 1</div>
<div class="a t" style="left:282px;top:361px;font-size:17.5px;line-height:17.5px;color:#000;font-family:'Liberation Serif', serif;">1</div>
<div class="a t" style="left:459px;top:361px;font-size:17.5px;line-height:17.5px;color:#000;font-family:'Liberation Serif', serif;">2</div>
<div class="a t" style="left:105px;top:381px;font-size:17.5px;line-height:17.5px;color:#000;font-family:'Liberation Serif', serif;letter-spacing:0.073px;">Показатель 2</div>
<div class="a t" style="left:283px;top:381px;font-size:17.5px;line-height:17.5px;color:#000;font-family:'Liberation Serif', serif;">2</div>
<div class="a t" style="left:459px;top:381px;font-size:17.5px;line-height:17.5px;color:#000;font-family:'Liberation Serif', serif;">6</div>
<div class="a t" style="left:105px;top:401px;font-size:17.5px;line-height:17.5px;color:#000;font-family:'Liberation Serif', serif;letter-spacing:0.073px;">Показатель 3</div>
<div class="a t" style="left:283px;top:401px;font-size:17.5px;line-height:17.5px;color:#000;font-family:'Liberation Serif', serif;">5</div>
<div class="a t" style="left:459px;top:401px;font-size:17.5px;line-height:17.5px;color:#000;font-family:'Liberation Serif', serif;">3</div>
<div class="a t" style="left:105px;top:421px;font-size:17.5px;line-height:17.5px;color:#000;font-family:'Liberation Serif', serif;letter-spacing:-0.018px;">Показатель 4</div>
<div class="a t" style="left:282px;top:421px;font-size:17.5px;line-height:17.5px;color:#000;font-family:'Liberation Serif', serif;">11</div>
<div class="a t" style="left:459px;top:421px;font-size:17.5px;line-height:17.5px;color:#000;font-family:'Liberation Serif', serif;">5</div>
<div class="a t" style="left:105px;top:441px;font-size:17.5px;line-height:17.5px;color:#000;font-family:'Liberation Serif', serif;letter-spacing:0.4px;">Итого:</div>
<div class="a" style="left:878px;top:209px;width:16px;height:605px;background:#f0f0f0;"></div>
<div class="a" style="left:878px;top:226px;width:15px;height:243px;background:#cdcdcd;"></div>
<svg class="a" style="left:881px;top:215px" width="10" height="7" viewBox="0 0 10 7"><path d="M1 5.800L5 1.800L9 5.800" fill="none" stroke="#3c3c3c" stroke-width="2"/></svg>
<svg class="a" style="left:881px;top:785px" width="10" height="7" viewBox="0 0 10 7"><path d="M1 1.200L5 5.200L9 1.200" fill="none" stroke="#3c3c3c" stroke-width="2"/></svg>
<div class="a" style="left:1px;top:797px;width:877px;height:17px;background:#f0f0f0;"></div>
<div class="a" style="left:17px;top:798px;width:806px;height:15px;background:#cdcdcd;"></div>
<svg class="a" style="left:5px;top:801px" width="8" height="9" viewBox="0 0 8 9"><path d="M6.200 0.800L2.300 4.500L6.200 8.200" fill="none" stroke="#3c3c3c" stroke-width="2"/></svg>
<svg class="a" style="left:865px;top:801px" width="8" height="9" viewBox="0 0 8 9"><path d="M1.800 0.800L5.700 4.500L1.800 8.200" fill="none" stroke="#3c3c3c" stroke-width="2"/></svg>
<div class="a" style="left:894px;top:136px;width:7px;height:677px;background:#fbfbfb;"></div>
<div class="a" style="left:894px;top:136px;width:1px;height:677px;background:#a9a9a9;"></div>
<div class="a" style="left:900px;top:136px;width:1px;height:677px;background:#a9a9a9;"></div>
<div class="a" style="left:894px;top:438px;width:7px;height:73px;background:#6d6d6d;"></div>
<svg class="a" style="left:895px;top:470px" width="5" height="9" viewBox="0 0 5 9"><path d="M0.500 0.500l4 4l-4 4z" fill="#f0f0f0"/></svg>
<div class="a" style="left:901px;top:136px;width:40px;height:676px;background:#f0f0f0;"></div>
<div class="a" style="left:894px;top:812px;width:47px;height:1px;background:#9a9a9a;"></div>
<div class="a" style="left:894px;top:813px;width:47px;height:1px;background:#f0f0f0;"></div>
<div class="a" style="left:920px;top:150px;width:2px;height:2px;background:#6a6a6a;"></div>
<div class="a" style="left:920px;top:155px;width:2px;height:2px;background:#6a6a6a;"></div>
<div class="a" style="left:920px;top:160px;width:2px;height:2px;background:#6a6a6a;"></div>
<div class="a" style="left:910px;top:175px;width:23px;height:1px;background:#dcdcdc;"></div>
<div class="a" style="left:905px;top:179px;width:30px;height:30px;border:1px solid #bdbdbd;border-radius:3px;background:#f6f6f6"></div>
<svg class="a" style="left:909px;top:183px" width="24" height="24" viewBox="0 0 24 24"><path d="M2.500 2.500h19v18h-19z" fill="#fff" stroke="#6d6d6d"/><path d="M2 2h20v4h-20z" fill="#6d6d6d"/><path d="M6 11h12M6 15.500h12" stroke="#6d6d6d" stroke-width="1"/><circle cx="14" cy="11" r="1.600" fill="#fff" stroke="#6d6d6d"/><circle cx="10" cy="15.500" r="1.600" fill="#fff" stroke="#6d6d6d"/></svg>
<svg class="a" style="left:909px;top:218px" width="24" height="24" viewBox="0 0 24 24"><path d="M4.500 2.500h10l5 5v14h-15z" fill="#fff" stroke="#6d6d6d"/><path d="M14.500 2.500v5h5" fill="none" stroke="#6d6d6d"/></svg>
<svg class="a" style="left:908px;top:252px" width="26" height="26" viewBox="0 0 26 26"><text x="1.500" y="20" font-family="Liberation Sans,sans-serif" font-size="20" fill="#6a6a6a">A</text><text x="9" y="21.500" font-family="Liberation Sans,sans-serif" font-size="20" fill="#3d74b0" stroke="#3d74b0" stroke-width="0.700">A</text><path d="M6 24h18.500" stroke="#3d74b0" stroke-width="1.200"/></svg>
<svg class="a" style="left:908px;top:288px" width="26" height="24" viewBox="0 0 26 24"><path d="M1.500 17.500v-13h7l2-2h10v15z" fill="#efd7a3" stroke="#dfbd7c"/><path d="M2 18l2.500-8.500h16.500v8.500z" fill="#f3dfb4"/><path d="M10.500 9.500h13v12h-13z" fill="#fff" stroke="#4d4d4d"/><path d="M11 21l4-5l2.500 2.500l3-3.500l2.500 3v3z" fill="#3d74b0"/><circle cx="14" cy="12.800" r="1.400" fill="#e2b866"/></svg>
<svg class="a" style="left:909px;top:322px" width="24" height="24" viewBox="0 0 24 24"><circle cx="12" cy="12" r="9.500" fill="#fff" stroke="#6d6d6d" stroke-width="1.200"/><path d="M17 7l-3 7l-7 3l3-7z" fill="#3d74b0"/><circle cx="12" cy="12" r="1" fill="#fff"/></svg>
<div class="a" style="left:0px;top:814px;width:942px;height:1px;background:#9c9c9c;"></div>
<div class="a" style="left:0px;top:815px;width:942px;height:38px;background:#f0f0f0;"></div>
<div class="a" style="left:0px;top:852px;width:942px;height:1px;background:#b4b4b4;"></div>
<div class="a" style="left:4px;top:821px;width:2px;height:2px;background:#8a8a8a"></div><div class="a" style="left:4px;top:825px;width:2px;height:2px;background:#8a8a8a"></div><div class="a" style="left:4px;top:829px;width:2px;height:2px;background:#8a8a8a"></div><div class="a" style="left:4px;top:833px;width:2px;height:2px;background:#8a8a8a"></div><div class="a" style="left:4px;top:837px;width:2px;height:2px;background:#8a8a8a"></div><div class="a" style="left:4px;top:841px;width:2px;height:2px;background:#8a8a8a"></div>
<svg class="a" style="left:17px;top:821px" width="24" height="24" viewBox="0 0 24 24"><path d="M2 3h20v5.5h-20z" fill="#bcbcbc"/><path d="M3.00 4.00h5.33v3.50h-5.33z" fill="#e4e4e4"/><path d="M9.33 4.00h5.33v3.50h-5.33z" fill="#e4e4e4"/><path d="M15.67 4.00h5.33v3.50h-5.33z" fill="#e4e4e4"/><path d="M2 9.5h20v12.5h-20z" fill="#bcbcbc"/><path d="M3.00 10.50h5.33v2.83h-5.33z" fill="#e4e4e4"/><path d="M9.33 10.50h5.33v2.83h-5.33z" fill="#e4e4e4"/><path d="M15.67 10.50h5.33v2.83h-5.33z" fill="#e4e4e4"/><path d="M3.00 14.33h5.33v2.83h-5.33z" fill="#e4e4e4"/><path d="M9.33 14.33h5.33v2.83h-5.33z" fill="#e4e4e4"/><path d="M15.67 14.33h5.33v2.83h-5.33z" fill="#e4e4e4"/><path d="M3.00 18.17h5.33v2.83h-5.33z" fill="#e4e4e4"/><path d="M9.33 18.17h5.33v2.83h-5.33z" fill="#e4e4e4"/><path d="M15.67 18.17h5.33v2.83h-5.33z" fill="#e4e4e4"/><path d="M16 22v-9.500M10.800 17.500l5.200-5.200l5.200 5.200" fill="none" stroke="#f3f3f3" stroke-width="4.4"/><path d="M16 22v-9.500M10.800 17.500l5.200-5.200l5.200 5.200" fill="none" stroke="#b6b6b6" stroke-width="2"/></svg>
<svg class="a" style="left:50px;top:821px" width="24" height="24" viewBox="0 0 24 24"><path d="M2 3h20v13h-20z" fill="#bcbcbc"/><path d="M3.00 4.00h5.33v3.00h-5.33z" fill="#e4e4e4"/><path d="M9.33 4.00h5.33v3.00h-5.33z" fill="#e4e4e4"/><path d="M15.67 4.00h5.33v3.00h-5.33z" fill="#e4e4e4"/><path d="M3.00 8.00h5.33v3.00h-5.33z" fill="#e4e4e4"/><path d="M9.33 8.00h5.33v3.00h-5.33z" fill="#e4e4e4"/><path d="M15.67 8.00h5.33v3.00h-5.33z" fill="#e4e4e4"/><path d="M3.00 12.00h5.33v3.00h-5.33z" fill="#e4e4e4"/><path d="M9.33 12.00h5.33v3.00h-5.33z" fill="#e4e4e4"/><path d="M15.67 12.00h5.33v3.00h-5.33z" fill="#e4e4e4"/><path d="M2 17h20v5h-20z" fill="#bcbcbc"/><path d="M3.00 18.00h5.33v3.00h-5.33z" fill="#e4e4e4"/><path d="M9.33 18.00h5.33v3.00h-5.33z" fill="#e4e4e4"/><path d="M15.67 18.00h5.33v3.00h-5.33z" fill="#e4e4e4"/><path d="M16.300 3v9.500M11 8.200l5.300 5.300l5.300-5.300" fill="none" stroke="#f3f3f3" stroke-width="4.4"/><path d="M16.300 3v9.500M11 8.200l5.300 5.300l5.300-5.300" fill="none" stroke="#b6b6b6" stroke-width="2"/></svg>
<svg class="a" style="left:83px;top:821px" width="24" height="24" viewBox="0 0 24 24"><path d="M2 3h8v19h-8z" fill="#bcbcbc"/><path d="M3.00 4.00h6.00v3.50h-6.00z" fill="#afafaf"/><path d="M3.00 8.50h6.00v3.50h-6.00z" fill="#e4e4e4"/><path d="M3.00 13.00h6.00v3.50h-6.00z" fill="#e4e4e4"/><path d="M3.00 17.50h6.00v3.50h-6.00z" fill="#e4e4e4"/><path d="M11 3h11v19h-11z" fill="#bcbcbc"/><path d="M12.00 4.00h4.00v3.50h-4.00z" fill="#afafaf"/><path d="M17.00 4.00h4.00v3.50h-4.00z" fill="#afafaf"/><path d="M12.00 8.50h4.00v3.50h-4.00z" fill="#e4e4e4"/><path d="M17.00 8.50h4.00v3.50h-4.00z" fill="#e4e4e4"/><path d="M12.00 13.00h4.00v3.50h-4.00z" fill="#e4e4e4"/><path d="M17.00 13.00h4.00v3.50h-4.00z" fill="#e4e4e4"/><path d="M12.00 17.50h4.00v3.50h-4.00z" fill="#e4e4e4"/><path d="M17.00 17.50h4.00v3.50h-4.00z" fill="#e4e4e4"/><path d="M22.500 17h-10M17 11.700l-5.300 5.300l5.300 5.300" fill="none" stroke="#f3f3f3" stroke-width="4.4"/><path d="M22.500 17h-10M17 11.700l-5.300 5.300l5.300 5.300" fill="none" stroke="#b6b6b6" stroke-width="2"/></svg>
<svg class="a" style="left:116px;top:821px" width="24" height="24" viewBox="0 0 24 24"><path d="M2 3h11v19h-11z" fill="#bcbcbc"/><path d="M3.00 4.00h4.00v3.50h-4.00z" fill="#afafaf"/><path d="M8.00 4.00h4.00v3.50h-4.00z" fill="#afafaf"/><path d="M3.00 8.50h4.00v3.50h-4.00z" fill="#e4e4e4"/><path d="M8.00 8.50h4.00v3.50h-4.00z" fill="#e4e4e4"/><path d="M3.00 13.00h4.00v3.50h-4.00z" fill="#e4e4e4"/><path d="M8.00 13.00h4.00v3.50h-4.00z" fill="#e4e4e4"/><path d="M3.00 17.50h4.00v3.50h-4.00z" fill="#e4e4e4"/><path d="M8.00 17.50h4.00v3.50h-4.00z" fill="#e4e4e4"/><path d="M14 3h8v19h-8z" fill="#bcbcbc"/><path d="M15.00 4.00h6.00v3.50h-6.00z" fill="#afafaf"/><path d="M15.00 8.50h6.00v3.50h-6.00z" fill="#e4e4e4"/><path d="M15.00 13.00h6.00v3.50h-6.00z" fill="#e4e4e4"/><path d="M15.00 17.50h6.00v3.50h-6.00z" fill="#e4e4e4"/><path d="M1.500 17h10M7 11.700l5.300 5.300l-5.300 5.300" fill="none" stroke="#f3f3f3" stroke-width="4.4"/><path d="M1.500 17h10M7 11.700l5.300 5.300l-5.300 5.300" fill="none" stroke="#b6b6b6" stroke-width="2"/></svg>
<svg class="a" style="left:158px;top:821px" width="24" height="24" viewBox="0 0 24 24"><path d="M2 3h20v5.5h-20z" fill="#bcbcbc"/><path d="M3.00 4.00h5.33v3.50h-5.33z" fill="#e4e4e4"/><path d="M9.33 4.00h5.33v3.50h-5.33z" fill="#e4e4e4"/><path d="M15.67 4.00h5.33v3.50h-5.33z" fill="#e4e4e4"/><path d="M2 9.5h20v12.5h-20z" fill="#bcbcbc"/><path d="M3.00 10.50h5.33v2.83h-5.33z" fill="#e4e4e4"/><path d="M9.33 10.50h5.33v2.83h-5.33z" fill="#e4e4e4"/><path d="M15.67 10.50h5.33v2.83h-5.33z" fill="#e4e4e4"/><path d="M3.00 14.33h5.33v2.83h-5.33z" fill="#e4e4e4"/><path d="M9.33 14.33h5.33v2.83h-5.33z" fill="#e4e4e4"/><path d="M15.67 14.33h5.33v2.83h-5.33z" fill="#e4e4e4"/><path d="M3.00 18.17h5.33v2.83h-5.33z" fill="#e4e4e4"/><path d="M9.33 18.17h5.33v2.83h-5.33z" fill="#e4e4e4"/><path d="M15.67 18.17h5.33v2.83h-5.33z" fill="#e4e4e4"/><path d="M14.800 14.300l6.700 6.700M21.500 14.300l-6.700 6.700" fill="none" stroke="#f3f3f3" stroke-width="5.199999999999999"/><path d="M14.800 14.300l6.700 6.700M21.500 14.300l-6.700 6.700" fill="none" stroke="#b6b6b6" stroke-width="2.8"/></svg>
<svg class="a" style="left:190px;top:821px" width="24" height="24" viewBox="0 0 24 24"><path d="M2 3h8v19h-8z" fill="#bcbcbc"/><path d="M3.00 4.00h6.00v3.50h-6.00z" fill="#afafaf"/><path d="M3.00 8.50h6.00v3.50h-6.00z" fill="#e4e4e4"/><path d="M3.00 13.00h6.00v3.50h-6.00z" fill="#e4e4e4"/><path d="M3.00 17.50h6.00v3.50h-6.00z" fill="#e4e4e4"/><path d="M11 3h11v19h-11z" fill="#bcbcbc"/><path d="M12.00 4.00h4.00v3.50h-4.00z" fill="#afafaf"/><path d="M17.00 4.00h4.00v3.50h-4.00z" fill="#afafaf"/><path d="M12.00 8.50h4.00v3.50h-4.00z" fill="#e4e4e4"/><path d="M17.00 8.50h4.00v3.50h-4.00z" fill="#e4e4e4"/><path d="M12.00 13.00h4.00v3.50h-4.00z" fill="#e4e4e4"/><path d="M17.00 13.00h4.00v3.50h-4.00z" fill="#e4e4e4"/><path d="M12.00 17.50h4.00v3.50h-4.00z" fill="#e4e4e4"/><path d="M17.00 17.50h4.00v3.50h-4.00z" fill="#e4e4e4"/><path d="M14.800 14.300l6.700 6.700M21.500 14.300l-6.700 6.700" fill="none" stroke="#f3f3f3" stroke-width="5.199999999999999"/><path d="M14.800 14.300l6.700 6.700M21.500 14.300l-6.700 6.700" fill="none" stroke="#b6b6b6" stroke-width="2.8"/></svg>
<svg class="a" style="left:224px;top:821px" width="24" height="24" viewBox="0 0 24 24"><path d="M2 3h20v19h-20z" fill="#bcbcbc"/><path d="M3.00 4.00h5.33v3.50h-5.33z" fill="#afafaf"/><path d="M9.33 4.00h5.33v3.50h-5.33z" fill="#afafaf"/><path d="M15.67 4.00h5.33v3.50h-5.33z" fill="#afafaf"/><path d="M3.00 8.50h5.33v3.50h-5.33z" fill="#e4e4e4"/><path d="M9.33 8.50h5.33v3.50h-5.33z" fill="#e4e4e4"/><path d="M15.67 8.50h5.33v3.50h-5.33z" fill="#e4e4e4"/><path d="M3.00 13.00h5.33v3.50h-5.33z" fill="#e4e4e4"/><path d="M9.33 13.00h5.33v3.50h-5.33z" fill="#e4e4e4"/><path d="M15.67 13.00h5.33v3.50h-5.33z" fill="#e4e4e4"/><path d="M3.00 17.50h5.33v3.50h-5.33z" fill="#e4e4e4"/><path d="M9.33 17.50h5.33v3.50h-5.33z" fill="#e4e4e4"/><path d="M15.67 17.50h5.33v3.50h-5.33z" fill="#e4e4e4"/><path d="M14.800 14.300l6.700 6.700M21.500 14.300l-6.700 6.700" fill="none" stroke="#f3f3f3" stroke-width="5.199999999999999"/><path d="M14.800 14.300l6.700 6.700M21.500 14.300l-6.700 6.700" fill="none" stroke="#b6b6b6" stroke-width="2.8"/></svg>
<svg class="a" style="left:264px;top:821px" width="24" height="24" viewBox="0 0 24 24"><path d="M2 3h20v19h-20z" fill="#bcbcbc"/><path d="M3.00 4.00h5.33v3.50h-5.33z" fill="#afafaf"/><path d="M9.33 4.00h5.33v3.50h-5.33z" fill="#afafaf"/><path d="M15.67 4.00h5.33v3.50h-5.33z" fill="#afafaf"/><path d="M3.00 8.50h5.33v3.50h-5.33z" fill="#e4e4e4"/><path d="M9.33 8.50h5.33v3.50h-5.33z" fill="#e4e4e4"/><path d="M15.67 8.50h5.33v3.50h-5.33z" fill="#e4e4e4"/><path d="M3.00 13.00h5.33v3.50h-5.33z" fill="#e4e4e4"/><path d="M9.33 13.00h5.33v3.50h-5.33z" fill="#e4e4e4"/><path d="M15.67 13.00h5.33v3.50h-5.33z" fill="#e4e4e4"/><path d="M3.00 17.50h5.33v3.50h-5.33z" fill="#e4e4e4"/><path d="M9.33 17.50h5.33v3.50h-5.33z" fill="#e4e4e4"/><path d="M15.67 17.50h5.33v3.50h-5.33z" fill="#e4e4e4"/><path d="M1.500 9h7.500v5.500h-7.500z" fill="#dadada" stroke="#f3f3f3" stroke-width="1"/><path d="M11.500 22.500l1.800-5l7.500-7.500l3.200 3.200l-7.500 7.500z" fill="#b6b6b6" stroke="#f3f3f3" stroke-width="1.200"/></svg>
<svg class="a" style="left:297px;top:821px" width="24" height="24" viewBox="0 0 24 24"><path d="M2 3h20v19h-20z" fill="#bcbcbc"/><path d="M3.00 4.00h5.33v3.50h-5.33z" fill="#afafaf"/><path d="M9.33 4.00h5.33v3.50h-5.33z" fill="#afafaf"/><path d="M15.67 4.00h5.33v3.50h-5.33z" fill="#afafaf"/><path d="M3.00 8.50h5.33v3.50h-5.33z" fill="#cbcbcb"/><path d="M9.33 8.50h5.33v3.50h-5.33z" fill="#cbcbcb"/><path d="M15.67 8.50h5.33v3.50h-5.33z" fill="#cbcbcb"/><path d="M3.00 13.00h5.33v3.50h-5.33z" fill="#cbcbcb"/><path d="M9.33 13.00h5.33v3.50h-5.33z" fill="#cbcbcb"/><path d="M15.67 13.00h5.33v3.50h-5.33z" fill="#cbcbcb"/><path d="M3.00 17.50h5.33v3.50h-5.33z" fill="#cbcbcb"/><path d="M9.33 17.50h5.33v3.50h-5.33z" fill="#cbcbcb"/><path d="M15.67 17.50h5.33v3.50h-5.33z" fill="#cbcbcb"/><path d="M11.500 22.500l1.800-5l7.500-7.500l3.200 3.200l-7.500 7.500z" fill="#b6b6b6" stroke="#f3f3f3" stroke-width="1.200"/></svg>
<svg class="a" style="left:338px;top:821px" width="24" height="24" viewBox="0 0 24 24"><path d="M2 3h20v19h-20z" fill="#bcbcbc"/><path d="M3.00 4.00h5.33v3.50h-5.33z" fill="#afafaf"/><path d="M9.33 4.00h5.33v3.50h-5.33z" fill="#afafaf"/><path d="M15.67 4.00h5.33v3.50h-5.33z" fill="#afafaf"/><path d="M3.00 8.50h5.33v3.50h-5.33z" fill="#e4e4e4"/><path d="M9.33 8.50h5.33v3.50h-5.33z" fill="#e4e4e4"/><path d="M15.67 8.50h5.33v3.50h-5.33z" fill="#e4e4e4"/><path d="M3.00 13.00h5.33v3.50h-5.33z" fill="#e4e4e4"/><path d="M9.33 13.00h5.33v3.50h-5.33z" fill="#e4e4e4"/><path d="M15.67 13.00h5.33v3.50h-5.33z" fill="#e4e4e4"/><path d="M3.00 17.50h5.33v3.50h-5.33z" fill="#e4e4e4"/><path d="M9.33 17.50h5.33v3.50h-5.33z" fill="#e4e4e4"/><path d="M15.67 17.50h5.33v3.50h-5.33z" fill="#e4e4e4"/><path d="M3 9.200h18v5.200h-18z" fill="#e4e4e4"/><path d="M3.500 11.800h17M7 8.500l-3.500 3.300l3.500 3.300M17 8.500l3.500 3.300l-3.500 3.300" fill="none" stroke="#bcbcbc" stroke-width="1.200"/></svg>
<svg class="a" style="left:372px;top:821px" width="24" height="24" viewBox="0 0 24 24"><path d="M2 3h20v19h-20z" fill="#bcbcbc"/><path d="M3 4h18v3h-18z" fill="#afafaf"/><path d="M3 8h8.5v3.700h-8.5z" fill="#e4e4e4"/><path d="M12.5 8h8.5v3.700h-8.5z" fill="#e4e4e4"/><path d="M3 12.7h5.3v3.700h-5.3z" fill="#e4e4e4"/><path d="M9.3 12.7h5.4v3.700h-5.4z" fill="#e4e4e4"/><path d="M15.7 12.7h5.3v3.700h-5.3z" fill="#e4e4e4"/><path d="M3 17.4h8.5v3.700h-8.5z" fill="#e4e4e4"/><path d="M12.5 17.4h8.5v3.700h-8.5z" fill="#e4e4e4"/></svg>
<svg class="a" style="left:404px;top:821px" width="24" height="24" viewBox="0 0 24 24"><path d="M2 3h20v8h-20z" fill="#bcbcbc"/><path d="M3.00 4.00h5.33v2.50h-5.33z" fill="#c6c6c6"/><path d="M9.33 4.00h5.33v2.50h-5.33z" fill="#c6c6c6"/><path d="M15.67 4.00h5.33v2.50h-5.33z" fill="#c6c6c6"/><path d="M3.00 7.50h5.33v2.50h-5.33z" fill="#e4e4e4"/><path d="M9.33 7.50h5.33v2.50h-5.33z" fill="#e4e4e4"/><path d="M15.67 7.50h5.33v2.50h-5.33z" fill="#e4e4e4"/><path d="M2 14h20v8h-20z" fill="#bcbcbc"/><path d="M3.00 15.00h5.33v2.50h-5.33z" fill="#e4e4e4"/><path d="M9.33 15.00h5.33v2.50h-5.33z" fill="#e4e4e4"/><path d="M15.67 15.00h5.33v2.50h-5.33z" fill="#e4e4e4"/><path d="M3.00 18.50h5.33v2.50h-5.33z" fill="#e4e4e4"/><path d="M9.33 18.50h5.33v2.50h-5.33z" fill="#e4e4e4"/><path d="M15.67 18.50h5.33v2.50h-5.33z" fill="#e4e4e4"/><path d="M12 1.500v7M9.500 4l2.500-2.500l2.500 2.500M12 23v-7M9.500 20.500l2.500 2.500l2.500-2.500" fill="none" stroke="#f3f3f3" stroke-width="3"/><path d="M12 1.500v7M9.500 4l2.500-2.500l2.500 2.500M12 23v-7M9.500 20.500l2.500 2.500l2.500-2.500" fill="none" stroke="#bcbcbc" stroke-width="1.100"/></svg>
<svg class="a" style="left:444px;top:821px" width="24" height="24" viewBox="0 0 24 24"><path d="M2 3h20v19h-20z" fill="#bcbcbc"/><path d="M3.00 4.00h5.33v3.50h-5.33z" fill="#afafaf"/><path d="M9.33 4.00h5.33v3.50h-5.33z" fill="#afafaf"/><path d="M15.67 4.00h5.33v3.50h-5.33z" fill="#afafaf"/><path d="M3.00 8.50h5.33v3.50h-5.33z" fill="#e4e4e4"/><path d="M9.33 8.50h5.33v3.50h-5.33z" fill="#e4e4e4"/><path d="M15.67 8.50h5.33v3.50h-5.33z" fill="#e4e4e4"/><path d="M3.00 13.00h5.33v3.50h-5.33z" fill="#e4e4e4"/><path d="M9.33 13.00h5.33v3.50h-5.33z" fill="#e4e4e4"/><path d="M15.67 13.00h5.33v3.50h-5.33z" fill="#e4e4e4"/><path d="M3.00 17.50h5.33v3.50h-5.33z" fill="#e4e4e4"/><path d="M9.33 17.50h5.33v3.50h-5.33z" fill="#e4e4e4"/><path d="M15.67 17.50h5.33v3.50h-5.33z" fill="#e4e4e4"/><path d="M9.500 17l4 4l8.500-9.500" fill="none" stroke="#f3f3f3" stroke-width="4.8"/><path d="M9.500 17l4 4l8.500-9.500" fill="none" stroke="#b6b6b6" stroke-width="2.4"/></svg>
<svg class="a" style="left:496px;top:821px" width="24" height="24" viewBox="0 0 24 24"><path d="M4 2.500h18M4 5.500h11M4 10.500h18M12.500 21.600v-8M7.800 17.800l4.700-4.700l4.700 4.700" stroke="#bcbcbc" stroke-width="1.200" fill="none"/></svg>
<svg class="a" style="left:530px;top:821px" width="24" height="24" viewBox="0 0 24 24"><path d="M3 10.500h18M3 13.500h11M11.500 2.200v6M7.500 5l4 3.600l4-3.600M11.500 21.600v-6M7.500 19.200l4-3.800l4 3.800" stroke="#bcbcbc" stroke-width="1.200" fill="none"/></svg>
<svg class="a" style="left:563px;top:821px" width="24" height="24" viewBox="0 0 24 24"><path d="M3 13.500h11M3 18.500h18M3 21.500h11M11.500 2.200v8M7 6.200l4.500 4.200l4.500-4.200" stroke="#bcbcbc" stroke-width="1.200" fill="none"/></svg>
<svg class="a" style="left:603px;top:821px" width="24" height="24" viewBox="0 0 24 24"><path d="M0 18h24v5.500h-24z" fill="#d2d2d2"/><path d="M3.500 18v-8.500l4.500-2v3" fill="none" stroke="#b8b8b8" stroke-width="2.200"/><path d="M7 8l9-4l4.500 10l-9 4z" fill="#cfcfcf" stroke="#c0c0c0" stroke-width="1"/><circle cx="14.500" cy="4.500" r="3.200" fill="none" stroke="#c4c4c4" stroke-width="1"/><circle cx="13" cy="10" r="1.400" fill="#e4e4e4" stroke="#bdbdbd" stroke-width="0.800"/></svg>
<svg class="a" style="left:648px;top:821px" width="24" height="24" viewBox="0 0 24 24"><path d="M2 3h20v19h-20z" fill="#bcbcbc"/><path d="M3.00 4.00h5.33v3.50h-5.33z" fill="#afafaf"/><path d="M9.33 4.00h5.33v3.50h-5.33z" fill="#afafaf"/><path d="M15.67 4.00h5.33v3.50h-5.33z" fill="#afafaf"/><path d="M3.00 8.50h5.33v3.50h-5.33z" fill="#e4e4e4"/><path d="M9.33 8.50h5.33v3.50h-5.33z" fill="#e4e4e4"/><path d="M15.67 8.50h5.33v3.50h-5.33z" fill="#e4e4e4"/><path d="M3.00 13.00h5.33v3.50h-5.33z" fill="#e4e4e4"/><path d="M9.33 13.00h5.33v3.50h-5.33z" fill="#e4e4e4"/><path d="M15.67 13.00h5.33v3.50h-5.33z" fill="#e4e4e4"/><path d="M3.00 17.50h5.33v3.50h-5.33z" fill="#e4e4e4"/><path d="M9.33 17.50h5.33v3.50h-5.33z" fill="#e4e4e4"/><path d="M15.67 17.50h5.33v3.50h-5.33z" fill="#e4e4e4"/><path d="M8 22.500l1-3l11-13.500l2.200 1.700l-10.700 13.800z" fill="#b6b6b6" stroke="#f3f3f3" stroke-width="1.200"/></svg>
<svg class="a" style="left:688px;top:821px" width="24" height="24" viewBox="0 0 24 24"><path d="M2.500 3.500h19v17h-19z" fill="#e4e4e4" stroke="#bcbcbc" stroke-width="1.200"/><path d="M12 3.500v17M2.500 12h19" stroke="#bcbcbc" stroke-width="1.200"/><path d="M2 21.500h20v1.800h-20z" fill="#d2d2d2"/></svg>
<svg class="a" style="left:732px;top:821px" width="24" height="24" viewBox="0 0 24 24"><path d="M2 3.200h20" stroke="#bcbcbc" stroke-width="2"/><path d="M2 8.800h20" stroke="#bcbcbc" stroke-width="1.600" stroke-dasharray="5.500 1.750"/><path d="M2 13.500h20" stroke="#bcbcbc" stroke-width="1.500" stroke-dasharray="3.200 1.500"/><path d="M2 18.600h20" stroke="#bcbcbc" stroke-width="1.500" stroke-dasharray="1.500 1.600"/></svg>
<svg class="a" style="left:776px;top:821px" width="24" height="24" viewBox="0 0 24 24"><path d="M2.500 2.500h19v15.500h-19z" fill="#e4e4e4" stroke="#bcbcbc"/><path d="M20.500 3.500l-13 14.500" stroke="#b6b6b6" stroke-width="1.800"/><path d="M6 15.500l3 3l-4 0.500z" fill="#b6b6b6"/><path d="M0 18h24v6h-24z" fill="#bcbcbc"/></svg>
<svg class="a" style="left:829px;top:821px" width="24" height="24" viewBox="0 0 24 24"><path d="M1.500 5.500h21v11h-21z" fill="#d6d6d6" stroke="#bcbcbc"/><circle cx="12" cy="10.500" r="2.600" fill="#b6b6b6"/><g fill="#dedede" stroke="#bcbcbc" stroke-width="0.800"><ellipse cx="9" cy="19.500" rx="3.500" ry="1.500"/><ellipse cx="9" cy="17.500" rx="3.500" ry="1.500"/><ellipse cx="18" cy="20" rx="3.800" ry="1.500"/><ellipse cx="18" cy="17.500" rx="3.800" ry="1.500"/><ellipse cx="18" cy="15" rx="3.800" ry="1.500"/></g></svg>
<div class="a t" style="left:865px;top:822px;font-size:24px;line-height:24px;color:#b4b4b4;transform:scaleX(.8);transform-origin:1px 0;">%</div>
<svg class="a" style="left:474.5px;top:831px" width="8" height="5" viewBox="0 0 8 5"><path d="M0 0.4h8L4 4.6z" fill="#7d7d7d"/></svg>
<svg class="a" style="left:632.5px;top:831px" width="8" height="5" viewBox="0 0 8 5"><path d="M0 0.4h8L4 4.6z" fill="#7d7d7d"/></svg>
<svg class="a" style="left:718px;top:831px" width="8" height="5" viewBox="0 0 8 5"><path d="M0 0.4h8L4 4.6z" fill="#7d7d7d"/></svg>
<svg class="a" style="left:762px;top:831px" width="8" height="5" viewBox="0 0 8 5"><path d="M0 0.4h8L4 4.6z" fill="#7d7d7d"/></svg>
<svg class="a" style="left:806px;top:831px" width="8" height="5" viewBox="0 0 8 5"><path d="M0 0.4h8L4 4.6z" fill="#7d7d7d"/></svg>
<div class="a" style="left:148px;top:825px;width:1px;height:18px;background:#c9c9c9"></div>
<div class="a" style="left:255px;top:825px;width:1px;height:18px;background:#c9c9c9"></div>
<div class="a" style="left:330px;top:825px;width:1px;height:18px;background:#c9c9c9"></div>
<div class="a" style="left:436px;top:825px;width:1px;height:18px;background:#c9c9c9"></div>
<div class="a" style="left:490px;top:825px;width:1px;height:18px;background:#c9c9c9"></div>
<div class="a" style="left:595px;top:825px;width:1px;height:18px;background:#c9c9c9"></div>
<div class="a" style="left:680px;top:825px;width:1px;height:18px;background:#c9c9c9"></div>
<div class="a" style="left:820px;top:825px;width:1px;height:18px;background:#c9c9c9"></div>
<svg class="a" style="left:926.5px;top:828px" width="13" height="10" viewBox="0 0 13 10"><path d="M1 0.7L5.3 5L1 9.3M7 0.7L11.3 5L7 9.3" fill="none" stroke="#555" stroke-width="1.5"/></svg>
<div class="a t" style="left:116px;top:860px;font-size:12px;line-height:12px;color:#000;letter-spacing:-0.368px;">22 слова, 93 символа</div>
<div class="a" style="left:107px;top:857px;width:1px;height:16px;background:#a0a0a0;"></div>
<div class="a" style="left:298px;top:857px;width:1px;height:16px;background:#a0a0a0;"></div>
<div class="a" style="left:365px;top:857px;width:1px;height:16px;background:#a0a0a0;"></div>
<div class="a" style="left:429px;top:857px;width:1px;height:16px;background:#a0a0a0;"></div>
<div class="a" style="left:498px;top:857px;width:1px;height:16px;background:#a0a0a0;"></div>
<div class="a" style="left:528px;top:857px;width:1px;height:16px;background:#a0a0a0;"></div>
<div class="a" style="left:559px;top:857px;width:1px;height:16px;background:#a0a0a0;"></div>
<div class="a" style="left:588px;top:857px;width:1px;height:16px;background:#a0a0a0;"></div>
<div class="a" style="left:676px;top:857px;width:1px;height:16px;background:#a0a0a0;"></div>
<div class="a" style="left:753px;top:857px;width:1px;height:16px;background:#a0a0a0;"></div>
<div class="a" style="left:897px;top:857px;width:1px;height:16px;background:#a0a0a0;"></div>
<svg class="a" style="left:506px;top:859px" width="20" height="12" viewBox="0 0 20 12"><path d="M1.500 3.500h8v5h-8z" fill="#fff" stroke="#333"/><path d="M12 1.500h5M12 10.500h5M14.500 1.500v9" stroke="#333" stroke-width="1.100" fill="none"/></svg>
<svg class="a" style="left:540px;top:859px" width="11" height="11" viewBox="0 0 11 11"><path d="M0.500 0.500h7.500l2 2v7h-9.500z" fill="#fff" stroke="#d4899a"/><path d="M2.500 0.500v3h4.500v-3M2.500 9.500v-3.500h5.500v3.500" fill="none" stroke="#d4899a"/></svg>
<svg class="a" style="left:686px;top:859px" width="60" height="13" viewBox="0 0 60 13"><g fill="#fff" stroke-width="1"><path d="M2.500 1.500h5l3 3v7h-8z" stroke="#3a78b5"/><path d="M17.500 1.500h6l2 2v8h-8zM27.500 1.500h6l2 2v8h-8z" stroke="#555"/><path d="M41.500 3.500c0-1 1-2 2-2h5v10h-7zM48.500 1.500h5c1 0 2 1 2 2v8h-7z" stroke="#555"/></g></svg>
<div class="a" style="left:0px;top:0px;width:942px;height:1px;background:#4f4f4f;"></div>
<div class="a" style="left:0px;top:0px;width:1px;height:876px;background:#2f2f2f;"></div>
<div class="a" style="left:941px;top:0px;width:1px;height:876px;background:#4a4a4a;"></div>
<div class="a" style="left:0px;top:875px;width:942px;height:1px;background:#3a3a3a;"></div>
</body></html>
